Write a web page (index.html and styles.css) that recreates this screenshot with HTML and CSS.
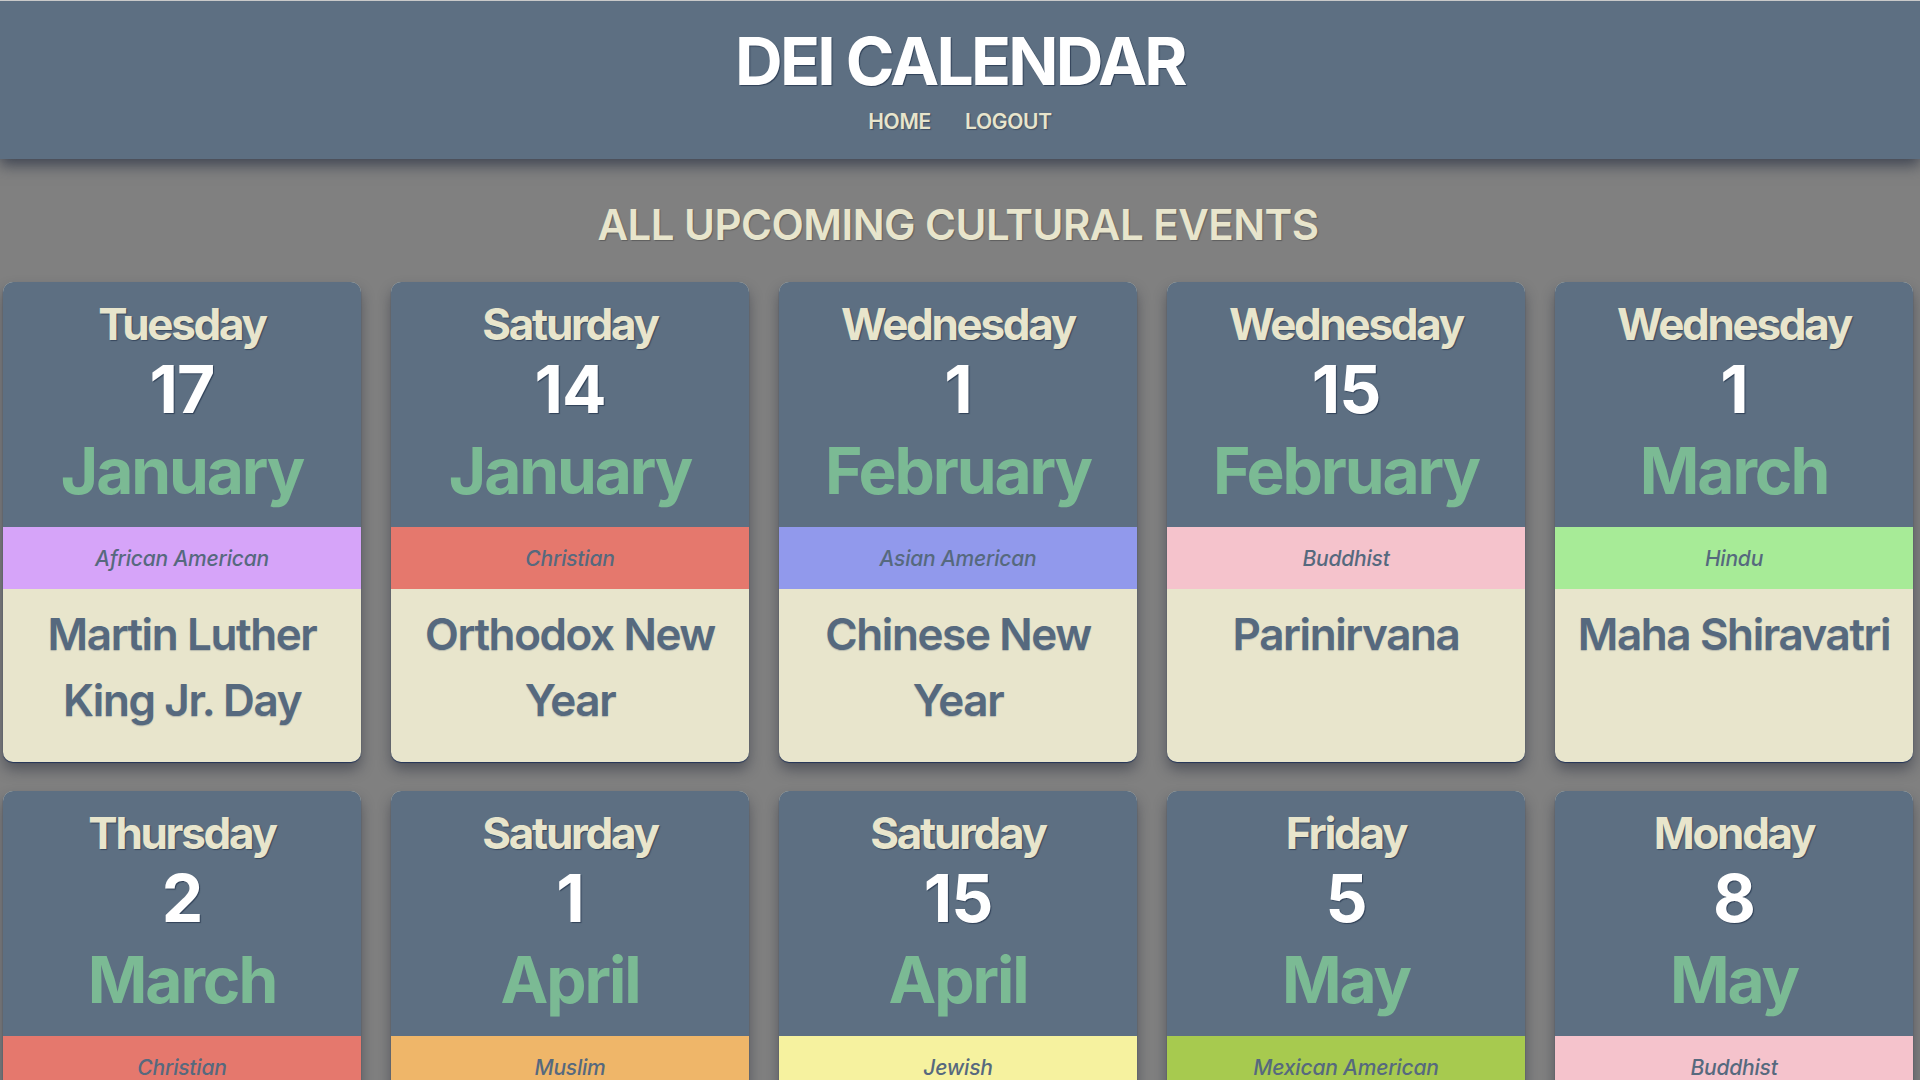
FILE: index.html
```html
<!DOCTYPE html>
<html lang="en">
<head>
<meta charset="utf-8">
<title>DEI Calendar</title>
<link rel="stylesheet" href="styles.css">
</head>
<body>
<header class="site-header">
  <h1 class="site-title">DEI CALENDAR</h1>
  <nav class="site-nav">
    <a class="nav-link" href="#">HOME</a>
    <a class="nav-link" href="#">LOGOUT</a>
  </nav>
</header>
<main class="content">
  <h2 class="page-title">ALL UPCOMING CULTURAL EVENTS</h2>
  <section class="event-grid">
    <article class="card">
      <div class="card-date"><div class="day">Tuesday</div><div class="num">17</div><div class="month">January</div></div>
      <div class="tag tag-purple">African American</div>
      <div class="card-body">Martin Luther King Jr. Day</div>
    </article>
    <article class="card">
      <div class="card-date"><div class="day">Saturday</div><div class="num">14</div><div class="month">January</div></div>
      <div class="tag tag-coral">Christian</div>
      <div class="card-body">Orthodox New Year</div>
    </article>
    <article class="card">
      <div class="card-date"><div class="day">Wednesday</div><div class="num">1</div><div class="month">February</div></div>
      <div class="tag tag-blue">Asian American</div>
      <div class="card-body">Chinese New Year</div>
    </article>
    <article class="card">
      <div class="card-date"><div class="day">Wednesday</div><div class="num">15</div><div class="month">February</div></div>
      <div class="tag tag-pink">Buddhist</div>
      <div class="card-body">Parinirvana</div>
    </article>
    <article class="card">
      <div class="card-date"><div class="day">Wednesday</div><div class="num">1</div><div class="month">March</div></div>
      <div class="tag tag-green">Hindu</div>
      <div class="card-body">Maha Shiravatri</div>
    </article>
    <article class="card">
      <div class="card-date"><div class="day">Thursday</div><div class="num">2</div><div class="month">March</div></div>
      <div class="tag tag-coral">Christian</div>
      <div class="card-body">Purim</div>
    </article>
    <article class="card">
      <div class="card-date"><div class="day">Saturday</div><div class="num">1</div><div class="month">April</div></div>
      <div class="tag tag-orange">Muslim</div>
      <div class="card-body">Ramadan</div>
    </article>
    <article class="card">
      <div class="card-date"><div class="day">Saturday</div><div class="num">15</div><div class="month">April</div></div>
      <div class="tag tag-yellow">Jewish</div>
      <div class="card-body">Passover</div>
    </article>
    <article class="card">
      <div class="card-date"><div class="day">Friday</div><div class="num">5</div><div class="month">May</div></div>
      <div class="tag tag-lime">Mexican American</div>
      <div class="card-body">Cinco de Mayo</div>
    </article>
    <article class="card">
      <div class="card-date"><div class="day">Monday</div><div class="num">8</div><div class="month">May</div></div>
      <div class="tag tag-pink">Buddhist</div>
      <div class="card-body">Vesak</div>
    </article>
  </section>
</main>
</body>
</html>
```
FILE: styles.css
```css
* { box-sizing: border-box; }
html, body { margin: 0; padding: 0; }
body {
  background: #808080;
  font-family: Inter, "Noto Sans", sans-serif;
  border-top: 1px solid #c9c9c9;
  overflow: hidden;
}
.site-header {
  background: #5d6f82;
  height: 158px;
  padding-top: 27px;
  text-align: center;
  box-shadow: 0 6px 14px rgba(40, 48, 66, 0.75);
  position: relative;
  z-index: 1;
}
.site-title {
  margin: 0;
  font-size: 66px;
  line-height: 1;
  font-weight: 700;
  color: #ffffff;
  letter-spacing: -2.8px;
  text-shadow: 1px 1px 1px rgba(30, 45, 70, 0.7);
}
.site-nav {
  margin-top: 17px;
  display: flex;
  justify-content: center;
  gap: 34px;
}
.nav-link {
  font-size: 21px;
  line-height: 1;
  font-weight: 600;
  color: #e8e5cc;
  text-decoration: none;
  letter-spacing: -0.3px;
  text-shadow: 1px 1px 1px rgba(30, 45, 70, 0.5);
}
.content {
  padding: 0 7px 0 3px;
}
.page-title {
  margin: 45px 0 36px;
  text-align: center;
  font-size: 42px;
  line-height: 1;
  font-weight: 600;
  color: #e8e5cc;
  letter-spacing: -0.5px;
  text-shadow: 1px 1px 1px rgba(60, 60, 60, 0.5);
}
.event-grid {
  display: grid;
  grid-template-columns: repeat(5, 1fr);
  gap: 29px 30px;
}
.card {
  height: 480px;
  border-radius: 10px;
  overflow: hidden;
  display: flex;
  flex-direction: column;
  box-shadow: 0 1px 1px #243558, 0 8px 14px rgba(30, 36, 50, 0.45);
  background: #e8e5cc;
}
.card-date {
  height: 245px;
  background: #5d6f82;
  text-align: center;
  padding-top: 20px;
}
.day {
  font-size: 44px;
  line-height: 1;
  font-weight: 700;
  color: #e8e5cc;
  letter-spacing: -2.3px;
  text-shadow: 1px 1px 1px rgba(30, 45, 70, 0.6);
}
.num {
  margin-top: 10px;
  font-size: 66px;
  line-height: 1;
  font-weight: 700;
  color: #ffffff;
  letter-spacing: -1px;
  text-shadow: 1px 1px 1px rgba(30, 45, 70, 0.7);
}
.month {
  margin-top: 17px;
  font-size: 64px;
  line-height: 1;
  font-weight: 700;
  color: #7bba94;
  letter-spacing: -2.1px;
}
.tag {
  height: 62px;
  display: flex;
  align-items: center;
  justify-content: center;
  font-size: 21px;
  font-style: italic;
  font-weight: 500;
  color: #56697e;
  letter-spacing: -0.2px;
}
.tag-purple { background: #d6a4f9; }
.tag-coral { background: #e5786d; }
.tag-blue { background: #9199ec; }
.tag-pink { background: #f5c3cc; }
.tag-green { background: #a7eb97; }
.tag-orange { background: #efb669; }
.tag-yellow { background: #f6f29f; }
.tag-lime { background: #a7ca4f; }
.card-body {
  flex: 1;
  padding: 12px 6px 0;
  text-align: center;
  font-size: 44px;
  line-height: 66px;
  font-weight: 600;
  color: #56697e;
  letter-spacing: -1.4px;
  text-shadow: 0 1px 1px rgba(40, 60, 90, 0.25);
}
```
